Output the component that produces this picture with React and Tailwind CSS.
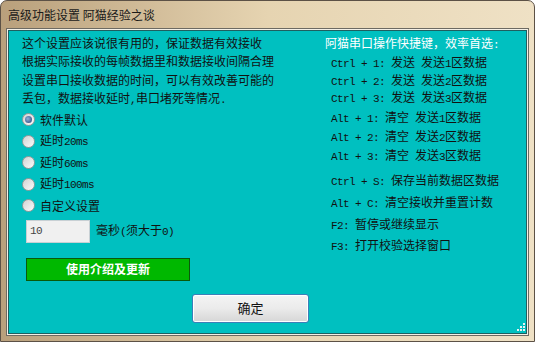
import React from "react";

function M({ children }) {
  return (
    <span className="font-['Liberation_Mono',monospace] text-[11px] tracking-[-0.6px]">{children}</span>
  );
}

function Radio({ checked, children }) {
  return (
    <div className="flex items-center h-[21.5px]">
      <span className="w-[13px] h-[13px] rounded-full border border-[#9a9a9a] bg-gradient-to-br from-[#d2d2d2] to-[#fbfbfb] flex items-center justify-center shrink-0">
        {checked && (
          <span className="w-[7px] h-[7px] rounded-full bg-[radial-gradient(circle_at_40%_40%,#8fb3da,#1c3f78)]" />
        )}
      </span>
      <span className="ml-[5px] leading-[18px]">{children}</span>
    </div>
  );
}

function Key({ h, children }) {
  return <div className={`${h} leading-[18px] whitespace-nowrap`}>{children}</div>;
}

export default function App() {
  return (
    <div className="w-[535px] h-[342px] flex flex-col rounded-t-[7px] border border-[#5c5146] bg-gradient-to-r from-[#b9a07c] via-[#e6d4b1] to-[#efe1c5] font-['Noto_Sans_CJK_SC',sans-serif] text-[12px] text-[#111]">
      {/* title bar */}
      <div className="h-[28px] shrink-0 flex items-center pl-[7px] text-[12px] text-[#1a1a1a]">
        高级功能设置 阿猫经验之谈
      </div>

      {/* client */}
      <div className="mx-[6px] border border-[#f4f0e6] shadow-[0_0_0_1px_#6d6a62]">
        <div className="relative w-[519px] h-[304px] bg-[#00c0c0] border border-[#1f5f5f] flex">
          {/* left column */}
          <div className="w-[310px] pl-[13px] pt-[3px]">
            <div className="leading-[18.3px] whitespace-nowrap">
              <div>这个设置应该说很有用的，保证数据有效接收</div>
              <div>根据实际接收的每帧数据里和数据接收间隔合理</div>
              <div>设置串口接收数据的时间，可以有效改善可能的</div>
              <div>
                丢包，数据接收延时<M>,</M>串口堵死等情况<M>.</M>
              </div>
            </div>
            <div>
              <Radio checked>软件默认</Radio>
              <Radio>
                延时<M>20ms</M>
              </Radio>
              <Radio>
                延时<M>60ms</M>
              </Radio>
              <Radio>
                延时<M>100ms</M>
              </Radio>
              <Radio>自定义设置</Radio>
            </div>
            <div className="flex items-center mt-[3px] ml-[4px]">
              <div className="w-[64px] h-[23px] bg-[#f0f0f0] border border-[#c8d0d4] flex items-center pl-[3px] text-[#444]">
                <M>10</M>
              </div>
              <span className="ml-[6px]">
                毫秒<M>(</M>须大于<M>0)</M>
              </span>
            </div>
            <button className="mt-[15px] ml-[4px] w-[164px] h-[23px] bg-[#00b800] border border-[#0a5a0a] text-white font-bold text-[12px] flex items-center justify-center">
              使用介绍及更新
            </button>
            <button className="mt-[13px] ml-[170px] w-[117px] h-[29px] rounded-[3px] border border-[#3d7fb8] bg-gradient-to-b from-[#f4f4f4] via-[#ebebeb] to-[#d6d6d6] shadow-[inset_0_0_0_1px_#ffffff] flex items-center justify-center text-[13px] text-[#111]">
              确定
            </button>
          </div>

          {/* right column */}
          <div className="pl-[6px] pt-[3px]">
            <Key h="h-[19px]">
              <span className="text-white">
                阿猫串口操作快捷键，效率首选<M>:</M>
              </span>
            </Key>
            <div className="pl-[6px]">
              <Key h="h-[18px]">
                <M>Ctrl + 1: </M>发送<M> </M>发送<M>1</M>区数据
              </Key>
              <Key h="h-[17px]">
                <M>Ctrl + 2: </M>发送<M> </M>发送<M>2</M>区数据
              </Key>
              <Key h="h-[20px]">
                <M>Ctrl + 3: </M>发送<M> </M>发送<M>3</M>区数据
              </Key>
              <Key h="h-[19px]">
                <M>Alt + 1: </M>清空<M> </M>发送<M>1</M>区数据
              </Key>
              <Key h="h-[19px]">
                <M>Alt + 2: </M>清空<M> </M>发送<M>2</M>区数据
              </Key>
              <Key h="h-[25px]">
                <M>Alt + 3: </M>清空<M> </M>发送<M>3</M>区数据
              </Key>
              <Key h="h-[22px]">
                <M>Ctrl + S: </M>保存当前数据区数据
              </Key>
              <Key h="h-[22px]">
                <M>Alt + C: </M>清空接收并重置计数
              </Key>
              <Key h="h-[21px]">
                <M>F2: </M>暂停或继续显示
              </Key>
              <Key h="h-[18px]">
                <M>F3: </M>打开校验选择窗口
              </Key>
            </div>
          </div>

          {/* size grip */}
          <svg className="absolute right-[1px] bottom-[2px]" width="9" height="9" viewBox="0 0 9 9">
            {[
              [7, 1],
              [4, 4],
              [7, 4],
              [1, 7],
              [4, 7],
              [7, 7],
            ].map(([x, y]) => (
              <rect key={`${x}-${y}`} x={x} y={y} width="2" height="2" fill="#e8f4f4" />
            ))}
          </svg>
        </div>
      </div>
    </div>
  );
}
